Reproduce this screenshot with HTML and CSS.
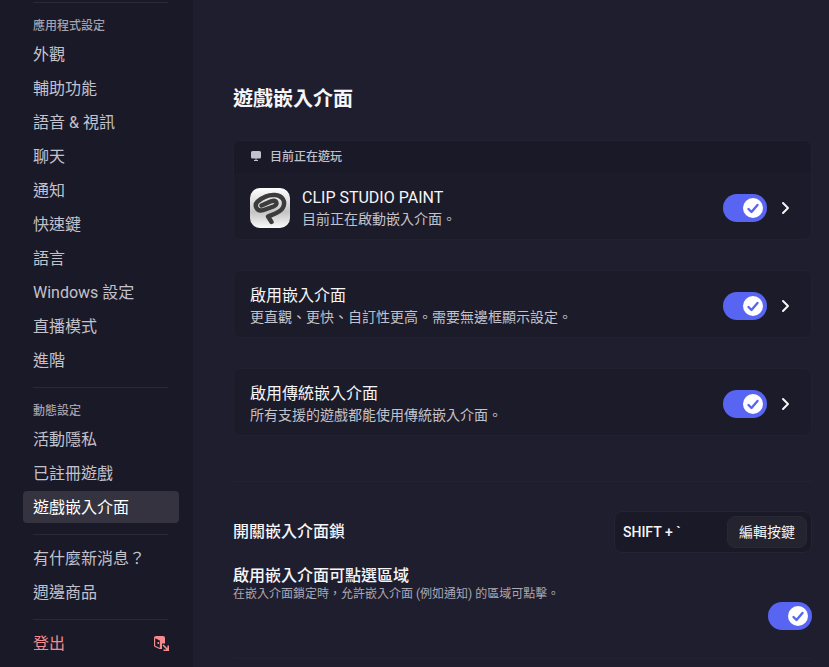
FILE: index.html
```html
<!DOCTYPE html>
<html lang="zh-Hant">
<head>
  <meta charset="UTF-8">
  <meta name="viewport" content="width=device-width, initial-scale=1.0">
  <title>遊戲嵌入介面</title>
  <link rel="stylesheet" href="styles.css">
</head>
<body>
  <nav class="sidebar">
    <hr class="separator">
    <h2 class="nav-header">應用程式設定</h2>
    <a href="#" class="nav-item">外觀</a>
    <a href="#" class="nav-item">輔助功能</a>
    <a href="#" class="nav-item">語音 &amp; 視訊</a>
    <a href="#" class="nav-item">聊天</a>
    <a href="#" class="nav-item">通知</a>
    <a href="#" class="nav-item">快速鍵</a>
    <a href="#" class="nav-item">語言</a>
    <a href="#" class="nav-item">Windows 設定</a>
    <a href="#" class="nav-item">直播模式</a>
    <a href="#" class="nav-item">進階</a>
    <hr class="separator">
    <h2 class="nav-header">動態設定</h2>
    <a href="#" class="nav-item">活動隱私</a>
    <a href="#" class="nav-item">已註冊遊戲</a>
    <a href="#" class="nav-item active" aria-current="page">遊戲嵌入介面</a>
    <hr class="separator">
    <a href="#" class="nav-item">有什麼新消息？</a>
    <a href="#" class="nav-item">週邊商品</a>
    <hr class="separator">
    <a href="#" class="nav-item logout">
      登出
      <svg width="16" height="16" viewBox="0 0 16 16" aria-hidden="true">
        <path fill="currentColor" fill-rule="evenodd" d="M3 1h7a2 2 0 0 1 2 2v5.500H9v5.500H6.500L2 12A2 2 0 0 1 1 10.500V3a2 2 0 0 1 2-2zM2.200 3.200v7.500l4.600 2.300V5.500z"/>
        <path fill="currentColor" d="M4.500 7h1.500v2H4.500z"/>
        <path fill="none" stroke="currentColor" stroke-width="1.600" d="M10 10l5 5M15.200 10.500v4.700h-4.700"/>
      </svg>
    </a>
  </nav>

  <main class="content">
    <h1>遊戲嵌入介面</h1>

    <section class="card">
      <div class="card-header">
        <svg width="12" height="12" viewBox="0 0 12 12" aria-hidden="true">
          <path fill="currentColor" d="M2.500 1h7A1.500 1.500 0 0 1 11 2.500v4.500A1.500 1.500 0 0 1 9.500 8.500h-7A1.500 1.500 0 0 1 1 7V2.500A1.500 1.500 0 0 1 2.500 1zM5.500 8.500h1v1.500h1.500v1h-4v-1h1.500z"/>
        </svg>
        目前正在遊玩
      </div>
      <div class="card-row">
        <svg class="app-icon" width="40" height="40" viewBox="0 0 40 40" aria-hidden="true">
          <defs>
            <linearGradient id="icon-bg" x1="0" y1="0" x2="0" y2="1">
              <stop offset="0" stop-color="#ffffff"/>
              <stop offset="0.600" stop-color="#c4c4c4"/>
              <stop offset="1" stop-color="#fafafa"/>
            </linearGradient>
          </defs>
          <rect width="40" height="40" rx="10" fill="url(#icon-bg)"/>
          <path fill="none" stroke="#3c3c3c" stroke-width="4.400" stroke-linecap="round" stroke-linejoin="round" d="M11.500 17.500L21 13.300C27 11.500 28.500 16.500 23.500 18.500L13 22.200C6.500 24 3.500 17 8 13.200C13 9 19 6.500 25 7C32.500 7.500 36 13.500 33 19.500C30.500 24.500 24 26 18 28.500L21.500 34"/>
        </svg>
        <div class="card-text">
          <label class="card-title" for="game-overlay">CLIP STUDIO PAINT</label>
          <p class="card-desc">目前正在啟動嵌入介面。</p>
        </div>
        <input type="checkbox" class="switch" id="game-overlay" checked>
        <button class="arrow" aria-label="CLIP STUDIO PAINT">
          <svg width="10" height="14" viewBox="0 0 10 14" aria-hidden="true"><path d="M2 2l5 5-5 5"/></svg>
        </button>
      </div>
    </section>

    <section class="card">
      <div class="card-row">
        <div class="card-text">
          <label class="card-title" for="overlay">啟用嵌入介面</label>
          <p class="card-desc">更直觀、更快、自訂性更高。需要無邊框顯示設定。</p>
        </div>
        <input type="checkbox" class="switch" id="overlay" checked>
        <button class="arrow" aria-label="啟用嵌入介面">
          <svg width="10" height="14" viewBox="0 0 10 14" aria-hidden="true"><path d="M2 2l5 5-5 5"/></svg>
        </button>
      </div>
    </section>

    <section class="card">
      <div class="card-row">
        <div class="card-text">
          <label class="card-title" for="legacy-overlay">啟用傳統嵌入介面</label>
          <p class="card-desc">所有支援的遊戲都能使用傳統嵌入介面。</p>
        </div>
        <input type="checkbox" class="switch" id="legacy-overlay" checked>
        <button class="arrow" aria-label="啟用傳統嵌入介面">
          <svg width="10" height="14" viewBox="0 0 10 14" aria-hidden="true"><path d="M2 2l5 5-5 5"/></svg>
        </button>
      </div>
    </section>

    <section class="options">
      <div class="option">
        <label class="option-title" for="keybind">開關嵌入介面鎖</label>
        <div class="keybind">
          <input type="text" id="keybind" value="SHIFT + `" readonly>
          <button class="keybind-button">編輯按鍵</button>
        </div>
      </div>
      <div class="option clickable">
        <div>
          <label class="option-title" for="click-zones">啟用嵌入介面可點選區域</label>
          <p class="option-desc">在嵌入介面鎖定時，允許嵌入介面 (例如通知) 的區域可點擊。</p>
        </div>
        <input type="checkbox" class="switch" id="click-zones" checked>
      </div>
    </section>
  </main>
</body>
</html>
```
FILE: styles.css
```css
* {
  box-sizing: border-box;
}

body {
  margin: 0;
  min-height: 100vh;
  display: flex;
  font-family: Roboto, "Noto Sans CJK TC", sans-serif;
  font-size: 16px;
  background-color: #1f1e2f;
  color: #f5f5f8;
}

button, input {
  font-family: inherit;
}

h1, h2, p {
  margin: 0;
}

/* Sidebar */
.sidebar {
  flex: 0 0 193px;
  padding: 2px 14px 0 23px;
  background-color: #1a1928;
}

.separator {
  height: 1px;
  margin: 11px 11px 7px 10px;
  border: 0;
  background-color: #2a2937;
}

.separator:first-child {
  margin-top: 0;
}

.nav-header {
  padding: 4px 10px 0;
  font-size: 12px;
  font-weight: 500;
  line-height: 24px;
  color: #a3a2ad;
}

.nav-item {
  display: flex;
  align-items: center;
  justify-content: space-between;
  height: 32px;
  margin-bottom: 2px;
  padding: 0 10px 2px;
  border-radius: 4px;
  color: #c3c2cc;
  text-decoration: none;
}

.nav-item.active {
  background-color: #34333f;
  color: #ffffff;
}

.nav-item.logout {
  color: #f58b8f;
}

.logout svg {
  margin-top: 2px;
}

/* Content */
.content {
  flex: 1;
  min-width: 0;
  padding: 85px 17px 0 40px;
}

h1 {
  margin-bottom: 27px;
  font-size: 20px;
  line-height: 28px;
}

.card {
  margin-bottom: 30px;
  border: 1px solid #22212f;
  border-radius: 8px;
  background-color: #1c1b29;
  overflow: hidden;
}

.card-header {
  display: flex;
  align-items: center;
  gap: 8px;
  height: 32px;
  padding: 0 16px 3px;
  background-color: #1a1927;
  font-size: 12px;
  font-weight: 500;
  color: #c3c2cc;
}

.card-row {
  display: flex;
  align-items: center;
  height: 66px;
  padding: 4px 16px 0;
}

.app-icon {
  margin-right: 12px;
}

.card-text {
  flex: 1;
}

.card-title {
  display: block;
  line-height: 22px;
}

.card-desc {
  font-size: 14px;
  line-height: 20px;
  color: #c3c2cc;
}

.switch {
  appearance: none;
  flex: none;
  width: 44px;
  height: 28px;
  margin: 0;
  padding: 4px;
  border-radius: 14px;
  background-color: #80808c;
}

.switch::before {
  content: "";
  display: block;
  width: 20px;
  height: 20px;
  border-radius: 50%;
  background: #ffffff;
}

.switch:checked {
  background-color: #5865f2;
}

.switch:checked::before {
  margin-left: 16px;
  background: #ffffff url("data:image/svg+xml,%3Csvg xmlns='http://www.w3.org/2000/svg' viewBox='0 0 20 20'%3E%3Cpath fill='none' stroke='%235865f2' stroke-width='2.400' stroke-linecap='round' stroke-linejoin='round' d='M5.500 11l3 3 6-7'/%3E%3C/svg%3E");
}

.arrow {
  display: flex;
  margin: 0 4px 0 14px;
  padding: 0;
  border: 0;
  background: none;
}

.arrow path {
  fill: none;
  stroke: #f5f5f8;
  stroke-width: 2;
  stroke-linecap: round;
  stroke-linejoin: round;
}

/* Keybind and click zones */
.options {
  margin-top: 45px;
  padding: 29px 0 28px;
  border-top: 1px solid #232231;
  border-bottom: 1px solid #232231;
}

.option {
  display: flex;
  align-items: center;
  justify-content: space-between;
}

.option-title {
  display: block;
  font-weight: 500;
  line-height: 20px;
}

.option-desc {
  font-size: 12px;
  line-height: 16px;
  color: #a9a8b3;
}

.keybind {
  display: flex;
  align-items: center;
  width: 198px;
  height: 42px;
  padding: 4px;
  border: 1px solid #252433;
  border-radius: 8px;
  background-color: #1a1927;
}

.keybind input {
  flex: 1;
  min-width: 0;
  padding: 0 4px;
  border: 0;
  background: none;
  font-size: 14px;
  font-weight: 500;
  color: #f5f5f8;
  outline: none;
}

.keybind-button {
  width: 80px;
  height: 32px;
  padding: 0 0 3px;
  border: 1px solid #282733;
  border-radius: 8px;
  background-color: #242430;
  font-size: 14px;
  color: #f5f5f8;
}

.clickable {
  flex-direction: column;
  align-items: flex-start;
  margin-top: 13px;
}

.clickable .switch {
  align-self: flex-end;
}
```
